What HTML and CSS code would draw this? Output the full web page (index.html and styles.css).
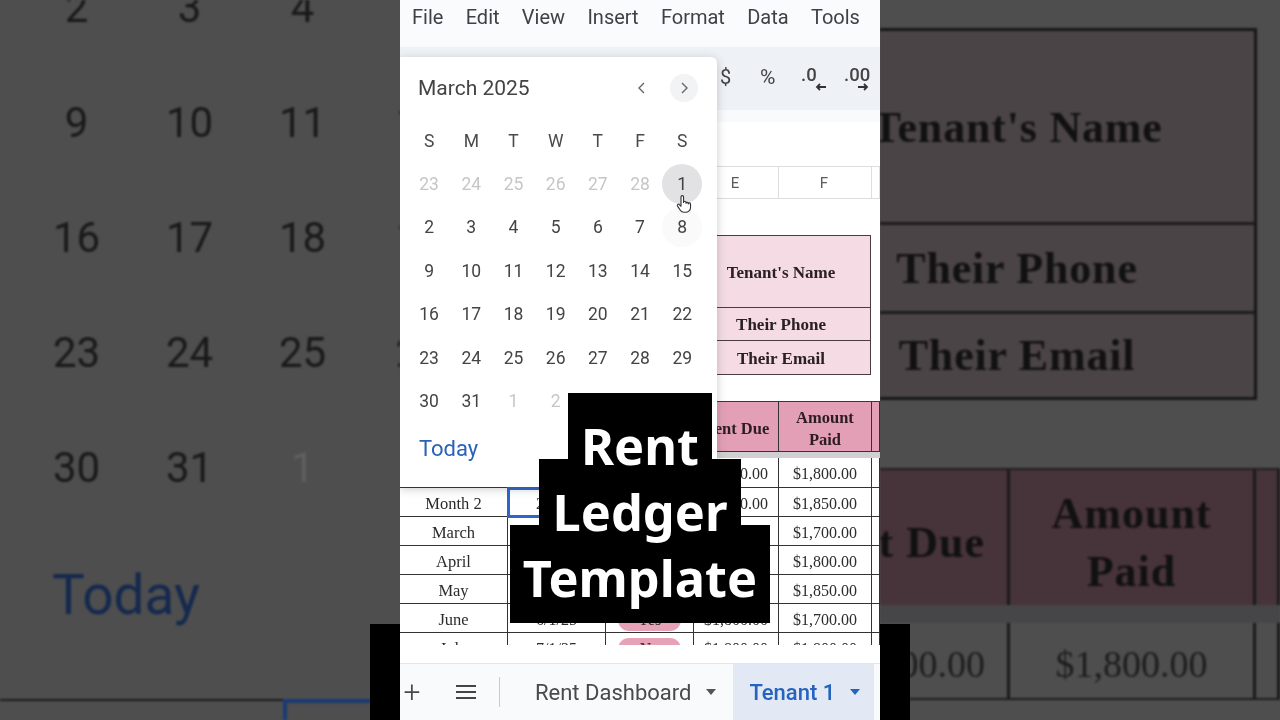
FILE: index.html
```html
<!DOCTYPE html>
<html lang="en">
<head>
<meta charset="utf-8">
<title>Rent Ledger Template</title>
<link rel="stylesheet" href="styles.css">
</head>
<body>
<div class="stage">
  <aside class="side side-left">
    <div class="big-days">
      <span>2</span><span>3</span><span>4</span><span>5</span>
      <span>9</span><span>10</span><span>11</span><span>12</span>
      <span>16</span><span>17</span><span>18</span><span>19</span>
      <span>23</span><span>24</span><span>25</span><span>26</span>
      <span>30</span><span>31</span><span class="big-muted">1</span><span class="big-muted">2</span>
    </div>
    <div class="big-today">Today</div>
    <div class="big-row"><div class="big-selected"></div></div>
  </aside>

  <main class="center">
    <nav class="menu">
      <span>File</span><span>Edit</span><span>View</span><span>Insert</span><span>Format</span><span>Data</span><span>Tools</span>
    </nav>
    <div class="toolbar">
      <span class="tool tool-dollar">$</span>
      <span class="tool tool-pct">%</span>
      <span class="tool tool-dec">.0
        <svg class="dec-arrow" viewBox="0 0 12 8"><path d="M11 4H2M5 1 2 4l3 3" fill="none" stroke="#333" stroke-width="1.8"/></svg>
      </span>
      <span class="tool tool-inc">.00
        <svg class="dec-arrow" viewBox="0 0 12 8"><path d="M1 4h9M7 1l3 3-3 3" fill="none" stroke="#333" stroke-width="1.8"/></svg>
      </span>
    </div>
    <div class="formula-gap"></div>
    <div class="col-heads">
      <span>A</span><span>B</span><span>C</span><span>E</span><span>F</span><span></span>
    </div>
    <section class="sheet">
      <div class="info-box">
        <div class="info-name">Tenant's Name</div>
        <div class="info-line">Their Phone</div>
        <div class="info-line">Their Email</div>
      </div>
      <div class="ledger ledger-head">
        <div>Month</div><div>Due Date</div><div>Paid?</div><div>Rent Due</div><div>Amount<br>Paid</div><div></div>
      </div>
      <div class="frozen-shadow"></div>
      <div class="ledger ledger-first">
        <div>Month 1</div><div>1/1/25</div><div><span class="pill">Yes</span></div><div>$1,800.00</div><div>$1,800.00</div><div></div>
      </div>
      <div class="ledger">
        <div>Month 2</div><div class="selected">2/1/25</div><div><span class="pill">Yes</span></div><div>$1,850.00</div><div>$1,850.00</div><div></div>
        <div>March</div><div>3/1/25</div><div><span class="pill">Yes</span></div><div>$1,700.00</div><div>$1,700.00</div><div></div>
        <div>April</div><div>4/1/25</div><div><span class="pill">Yes</span></div><div>$1,800.00</div><div>$1,800.00</div><div></div>
        <div>May</div><div>5/1/25</div><div><span class="pill">Yes</span></div><div>$1,850.00</div><div>$1,850.00</div><div></div>
        <div>June</div><div>6/1/25</div><div><span class="pill">Yes</span></div><div>$1,800.00</div><div>$1,700.00</div><div></div>
        <div>July</div><div>7/1/25</div><div><span class="pill">No</span></div><div>$1,800.00</div><div>$1,800.00</div><div></div>
      </div>
    </section>
    <div class="sheet-gap"></div>
    <footer class="tabs">
      <span class="tab-plus">+</span>
      <svg class="tab-menu" viewBox="0 0 22 16"><path d="M1 2h20M1 8h20M1 14h20" stroke="#444" stroke-width="2.2"/></svg>
      <span class="tab-sep"></span>
      <span class="tab-name">Rent Dashboard</span>
      <span class="caret"></span>
      <span class="tab-active"><span>Tenant 1</span><span class="caret caret-blue"></span></span>
    </footer>

    <div class="popup">
      <div class="pop-head">
        <span class="pop-title">March 2025</span>
        <svg class="chev" viewBox="0 0 12 14"><path d="M8 2 3 7l5 5" fill="none" stroke="#666" stroke-width="1.4"/></svg>
        <span class="chev-circle"><svg class="chev" viewBox="0 0 12 14"><path d="m4 2 5 5-5 5" fill="none" stroke="#666" stroke-width="1.4"/></svg></span>
      </div>
      <div class="cal">
        <span class="wd">S</span><span class="wd">M</span><span class="wd">T</span><span class="wd">W</span><span class="wd">T</span><span class="wd">F</span><span class="wd">S</span>
        <span class="mut">23</span><span class="mut">24</span><span class="mut">25</span><span class="mut">26</span><span class="mut">27</span><span class="mut">28</span><span class="hov">1</span>
        <span>2</span><span>3</span><span>4</span><span>5</span><span>6</span><span>7</span><span class="faint">8</span>
        <span>9</span><span>10</span><span>11</span><span>12</span><span>13</span><span>14</span><span>15</span>
        <span>16</span><span>17</span><span>18</span><span>19</span><span>20</span><span>21</span><span>22</span>
        <span>23</span><span>24</span><span>25</span><span>26</span><span>27</span><span>28</span><span>29</span>
        <span>30</span><span>31</span><span class="mut">1</span><span class="mut">2</span><span class="mut">3</span><span class="mut">4</span><span class="mut">5</span>
      </div>
      <div class="pop-today">Today</div>
    </div>
    <svg class="hand" viewBox="0 0 24 28"><path d="M8 15V4.500a1.700 1.700 0 0 1 3.400 0V12a1.600 1.600 0 0 1 3.200 0v1a1.600 1.600 0 0 1 3.100 0v1a1.500 1.500 0 0 1 3 0v4.500a6.500 6.500 0 0 1-6.500 6.500h-2.200c-2.500 0-4-1-5.200-3L3.200 16.500a1.600 1.600 0 0 1 2.600-1.800L8 17Z" fill="#fff" stroke="#333" stroke-width="1.500" stroke-linejoin="round"/></svg>
  </main>

  <aside class="side side-right">
    <div class="big-box">
      <div class="big-name">Tenant's Name</div>
      <div class="big-line">Their Phone</div>
      <div class="big-line">Their Email</div>
    </div>
    <div class="big-head">
      <div class="big-due">Rent Due</div><div class="big-paid">Amount<br>Paid</div><div class="big-rest"></div>
    </div>
    <div class="big-shadow"></div>
    <div class="big-cells">
      <div class="big-due">$1,800.00</div><div class="big-paid">$1,800.00</div><div class="big-rest"></div>
    </div>
    <div class="big-bottom"></div>
  </aside>

  <div class="letterbox"></div>
  <div class="caption">
    <div class="cap-line cap-first"><span>Rent</span></div>
    <div class="cap-line"><span>Ledger</span></div>
    <div class="cap-line cap-last"><span>Template</span></div>
  </div>
</div>
</body>
</html>
```
FILE: styles.css
```css
* { box-sizing: border-box; }
html, body { margin: 0; padding: 0; background: #4e4e4e; }
body { width: 1280px; height: 720px; overflow: hidden; font-family: Roboto, "Noto Sans", sans-serif; }
.stage { position: relative; display: flex; width: 1280px; height: 720px; overflow: hidden; }

/* blurred, dimmed side panels */
.side { width: 400px; height: 720px; overflow: hidden; background: #4e4e4e; filter: blur(1.1px); color: #191919; flex: none; }
.big-days { display: grid; grid-template-columns: 113px 113px 113px 120px; grid-auto-rows: 115px; margin-top: -50px; padding-left: 20px; align-items: center; justify-items: center; font-size: 42px; }
.big-muted { color: #5f5f5f; }
.big-today { height: 174px; padding: 39px 0 0 52px; font-size: 55px; line-height: 62px; color: #15294e; }
.big-row { height: 21px; border-top: 2px solid #1b1b1b; padding-left: 283px; }
.big-selected { height: 30px; margin-top: -2px; border: 4px solid #1b3a74; border-right: 0; }

.side-right { font-family: "Liberation Serif", serif; font-weight: 700; color: #111; }
.big-box { width: 377px; height: 372px; margin-top: 28px; border: 3px solid #171717; border-left: 0; background: #4b4446; display: flex; flex-direction: column; }
.big-name, .big-line { display: flex; align-items: center; justify-content: center; margin-left: -100px; font-size: 44px; letter-spacing: .8px; border-bottom: 3px solid #1c1c1c; }
.big-name { height: 194px; padding-top: 2px; }
.big-line { height: 89px; padding-top: 0; }
.big-line:last-child { border-bottom: 0; height: 83px; padding-top: 0; }
.big-head, .big-cells { display: flex; text-align: center; }
.big-head { height: 137px; margin-top: 68px; background: #47333a; border-top: 2px solid #1f1f1f; font-size: 44px; line-height: 58px; letter-spacing: 1px; }
.big-head > div { display: flex; align-items: center; justify-content: center; padding-top: 10px; border-right: 3px solid #1a1a1a; }
.big-due { width: 130px; flex: none; white-space: nowrap; }
.big-head .big-due { justify-content: flex-end; padding-right: 22px; }
.big-paid { width: 246px; flex: none; }
.big-rest { flex: 1; }
.big-shadow { height: 18px; background: #464648; }
.big-cells { height: 77px; border-bottom: 2px solid #1c1c1c; font-weight: 400; font-size: 38px; color: #1d1d1d; }
.big-cells > div { display: flex; align-items: center; padding-top: 6px; border-right: 3px solid #1a1a1a; justify-content: center; }
.big-cells .big-due { justify-content: flex-end; padding-right: 22px; overflow: hidden; }
.big-bottom { height: 20px; }

/* central phone column */
.center { position: relative; z-index: 2; width: 480px; height: 720px; flex: none; background: #fff; color: #3f4245; display: flex; flex-direction: column; overflow: hidden; filter: blur(.35px); }
.menu { height: 47px; padding: 6px 0 0 12px; display: flex; gap: 22.300px; background: #f9fbfd; font-size: 20px; line-height: 22px; align-items: flex-start; }
.toolbar { position: relative; height: 63px; background: #eef2f6; }
.tool { position: absolute; top: 18px; font-size: 20px; line-height: 24px; color: #444; }
.tool-dollar { left: 320px; }
.tool-pct { left: 360px; font-size: 21px; }
.tool-dec { left: 401px; top: 16px; font-size: 18.500px; font-weight: 500; }
.tool-inc { left: 444px; top: 16px; font-size: 18.500px; font-weight: 500; }
.dec-arrow { position: absolute; top: 20px; width: 12px; height: 8px; }
.tool-dec .dec-arrow { right: -10px; }
.tool-inc .dec-arrow { right: 1px; }
.formula-gap { height: 56px; background: linear-gradient(#f8fafc 12px, #fff 12px); }
.col-heads, .ledger { display: grid; grid-template-columns: 108px 98px 88px 85px 93px 8px; }
.col-heads { height: 33px; border-top: 1px solid #dedede; border-bottom: 1px solid #dedede; font-size: 15px; color: #5c5c5c; }
.col-heads span { display: flex; align-items: center; justify-content: center; padding-right: 2px; border-right: 1px solid #dedede; }
.sheet { height: 446px; padding-top: 36px; overflow: hidden; font-family: "Liberation Serif", serif; color: #2b2b2b; background: #fff; }
.info-box { margin-left: 291px; width: 180px; height: 140px; border: 1px solid #4a3d41; background: #f5dce4; font-weight: 700; font-size: 17px; color: #2a2024; }
.info-name, .info-line { display: flex; align-items: center; justify-content: center; padding-top: 2px; }
.info-name { height: 72px; border-bottom: 1px solid #4a3d41; }
.info-line { height: 33px; border-bottom: 1px solid #4a3d41; }
.info-line:last-child { border-bottom: 0; }
.ledger { font-size: 16px; text-align: center; }
.ledger > div { height: 29px; padding-top: 3px; display: flex; align-items: center; justify-content: center; border-right: 1px solid #333; border-bottom: 1px solid #333; white-space: nowrap; }
.ledger > div:nth-child(6n + 1) { font-size: 16.500px; }
.ledger-head { margin-top: 26px; background: #e39fb5; border-top: 1px solid #433; font-weight: 700; font-size: 16.500px; line-height: 22px; color: #2d1c22; }
.ledger-head > div, .ledger-head > div:nth-child(6n + 1) { height: 50px; padding-top: 4px; font-size: 16.500px; }
.frozen-shadow { height: 6px; background: #d0d0d2; }
.ledger-first > div { height: 30px; }
.ledger > div:has(> .pill) { padding-top: 0; }
.selected { position: relative; outline: 3px solid #2d66c9; outline-offset: -2px; }
.pill { display: block; width: 63px; height: 22px; margin-top: 3px; border-radius: 11px; background: #e6a3b7; line-height: 22px; }
.sheet-gap { height: 18px; background: #fff; }
.tabs { height: 57px; display: flex; align-items: center; background: #f8fafc; border-top: 1px solid #e5e5e5; font-size: 22px; color: #4a4a4a; padding-left: 3px; }
.tab-plus { width: 18px; font-size: 30px; font-weight: 300; line-height: 30px; text-align: center; }
.tab-menu { width: 22px; height: 16px; margin-left: 34px; }
.tab-sep { width: 1px; height: 30px; margin-left: 22px; background: #c9c9c9; }
.tab-name { margin-left: 35px; white-space: nowrap; }
.caret { width: 0; height: 0; border: 5.500px solid transparent; border-top: 6px solid #555; border-bottom: 0; margin-left: 15px; flex: none; }
.caret-blue { border-top-color: #2463bf; margin-left: 15px; }
.tab-active { display: flex; align-items: center; width: 141px; height: 56px; margin-left: 17px; padding-left: 16px; background: #e2e9f4; color: #2463bf; font-weight: 500; white-space: nowrap; }

/* date picker */
.popup { position: absolute; left: 0; top: 57px; width: 317px; height: 430px; background: #fff; border-radius: 0 6px 0 0; box-shadow: 0 2px 10px rgba(60, 64, 67, .28); }
.pop-head { display: flex; align-items: center; height: 28px; margin-top: 17px; padding-left: 18px; }
.pop-title { font-size: 21px; color: #444; width: 218px; }
.chev { width: 12px; height: 14px; }
.chev-circle { display: flex; align-items: center; justify-content: center; width: 28px; height: 28px; margin-left: 22px; border-radius: 50%; background: #f1f3f4; }
.cal { display: grid; grid-template-columns: repeat(7, 42.200px); grid-auto-rows: 43.400px; margin-top: 17px; padding-left: 8px; justify-items: center; align-items: center; font-size: 17.500px; color: #444; }
.wd { font-weight: 400; color: #4a4a4a; }
.mut { color: #c6c6c6; }
.hov, .faint { width: 40px; height: 40px; border-radius: 50%; display: flex; align-items: center; justify-content: center; }
.hov { background: #e2e2e4; }
.faint { background: #fafafa; }
.pop-today { padding: 12px 0 0 19px; font-size: 22px; line-height: 28px; color: #2a62b8; }
.hand { position: absolute; left: 275px; top: 192px; width: 18px; height: 24px; }

/* overlays */
.letterbox { position: absolute; z-index: 1; left: 370px; top: 624px; width: 540px; height: 96px; background: #000; }
.caption { position: absolute; z-index: 3; left: 0; top: 393px; width: 1280px; display: flex; flex-direction: column; align-items: center; font-family: "Noto Sans", sans-serif; font-weight: 700; font-size: 50.500px; color: #fff; }
.cap-line { height: 66px; padding: 20px 14px 0; line-height: 66px; background: #000; }
.cap-first { padding: 20px 13px 0; }
.cap-line span { position: relative; z-index: 1; }
.cap-last { height: 98px; padding: 20px 13px 0; }
```
